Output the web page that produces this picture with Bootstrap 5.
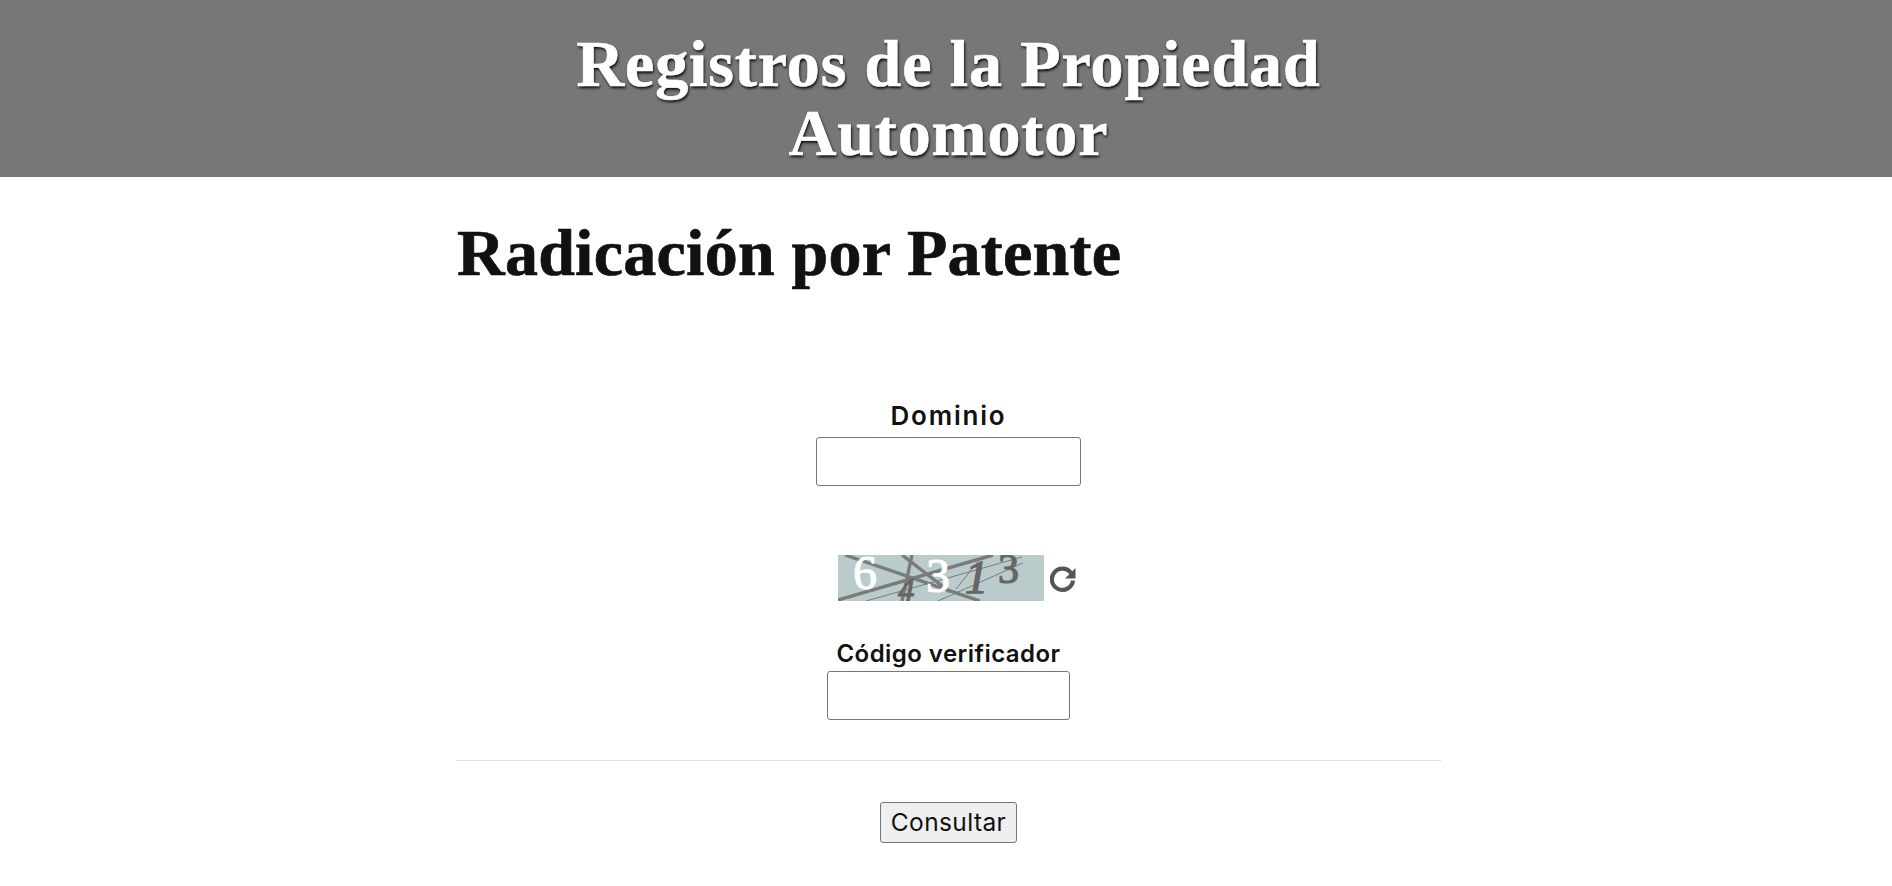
<!DOCTYPE html>
<html lang="es">
<head>
<meta charset="utf-8">
<title>Radicación por Patente</title>
<link href="https://cdn.jsdelivr.net/npm/bootstrap@5.3.0/dist/css/bootstrap.min.css" rel="stylesheet">
<style>
body{background:#fff;color:#111;font-family:"Inter","Noto Sans",sans-serif;}
.site-head{background:#777;height:177px;padding-top:29px;padding-left:5px;}
.site-title{font-family:"Liberation Serif",serif;font-weight:700;font-size:66px;line-height:69px;color:#fff;text-shadow:1px 2px 3px #000;margin:0;letter-spacing:.9px;-webkit-text-stroke:.7px #fff;}
.page-wrap{width:985px;margin-left:456px;}
.page-title{font-family:"Liberation Serif",serif;font-weight:700;font-size:66px;line-height:76px;color:#111;margin:0;padding-top:38px;padding-left:1px;height:224px;letter-spacing:.25px;-webkit-text-stroke:.7px #111;}
.lbl{font-weight:600;font-size:26px;line-height:30px;margin:0 0 6px;color:#111;letter-spacing:1.8px;}
.lbl-sm{font-size:24px;line-height:29px;margin-bottom:3px;letter-spacing:.45px;}
.field{display:block;background:#fff;border:1px solid #767676;border-radius:3px;height:49px;padding:0 8px;outline:none;}
.field-a{width:265px;}
.field-b{width:243px;}
.captcha-row{margin-top:69px;margin-bottom:38px;height:46px;gap:7px;padding-left:19px;}
.captcha-img{width:206px;height:46px;display:block;overflow:visible;}
.reload-ic{width:27px;height:27px;display:block;margin-top:11px;margin-left:-1px;margin-right:1px;}
.rule{border:0;border-top:1px solid #ddd;opacity:1;margin:40px 0 41px;}
.go-btn{font-size:24.5px;letter-spacing:.4px;line-height:29px;height:41px;width:137px;padding:0;background:#efefef;border:1px solid #767676;border-radius:3px;color:#111;}
</style>
</head>
<body>
<header class="site-head text-center">
  <h1 class="site-title">Registros de la Propiedad<br>Automotor</h1>
</header>
<main class="page-wrap">
  <h2 class="page-title">Radicación por Patente</h2>
  <form class="d-flex flex-column align-items-center">
    <label class="lbl" for="dominio">Dominio</label>
    <input class="field field-a" id="dominio" type="text">
    <div class="captcha-row d-flex align-items-start">
      <svg class="captcha-img" viewBox="0 0 206 46" role="img" aria-label="captcha">
        <defs><clipPath id="capclip"><rect width="206" height="46"/></clipPath></defs>
        <rect width="206" height="46" fill="#b9cbcb"/>
        <g clip-path="url(#capclip)" stroke="#7b7b7b" fill="none">
          <path stroke-width="3.4" d="M0 45 L155 0"/>
          <path stroke-width="3.4" d="M7 0 L142 46"/>
          <path stroke-width="3.4" d="M64 0 L112 37"/>
          <path stroke-width="1" d="M28 46 L184 2"/>
          <path stroke-width="3.4" d="M64 46 L74 0"/>
          <path stroke-width="1" d="M100 46 L185 8"/>
          <path stroke-width="1" d="M118 34 L142 4"/>
        </g>
        <g clip-path="url(#capclip)" font-family="'Liberation Serif',serif">
          <text x="15" y="34" font-size="48" fill="#fff" stroke="#fff" stroke-width="1">6</text>
          <text x="60" y="46" font-size="33" font-style="italic" fill="#666" stroke="#666" stroke-width="1">4</text>
          <text x="88" y="37" font-size="48" fill="#fff" stroke="#fff" stroke-width="1">3</text>
          <text x="127" y="38" font-size="46" font-style="italic" fill="#666" stroke="#666" stroke-width="1.4">1</text>
          <text x="160" y="28" font-size="42" fill="#666" stroke="#666" stroke-width="1.2">3</text>
        </g>
      </svg>
      <svg class="reload-ic" viewBox="0 0 27 27" aria-hidden="true">
        <path d="M21 7A10.6 10.6 0 1 0 23 14.5" fill="none" stroke="#555" stroke-width="4.2"/>
        <path d="M25.5 2V12.5H15Z" fill="#555"/>
      </svg>
    </div>
    <label class="lbl lbl-sm" for="codigo">Código verificador</label>
    <input class="field field-b" id="codigo" type="text">
    <hr class="rule w-100">
    <button class="go-btn" type="button">Consultar</button>
  </form>
</main>
<script src="https://cdn.jsdelivr.net/npm/bootstrap@5.3.0/dist/js/bootstrap.bundle.min.js"></script>
</body>
</html>
